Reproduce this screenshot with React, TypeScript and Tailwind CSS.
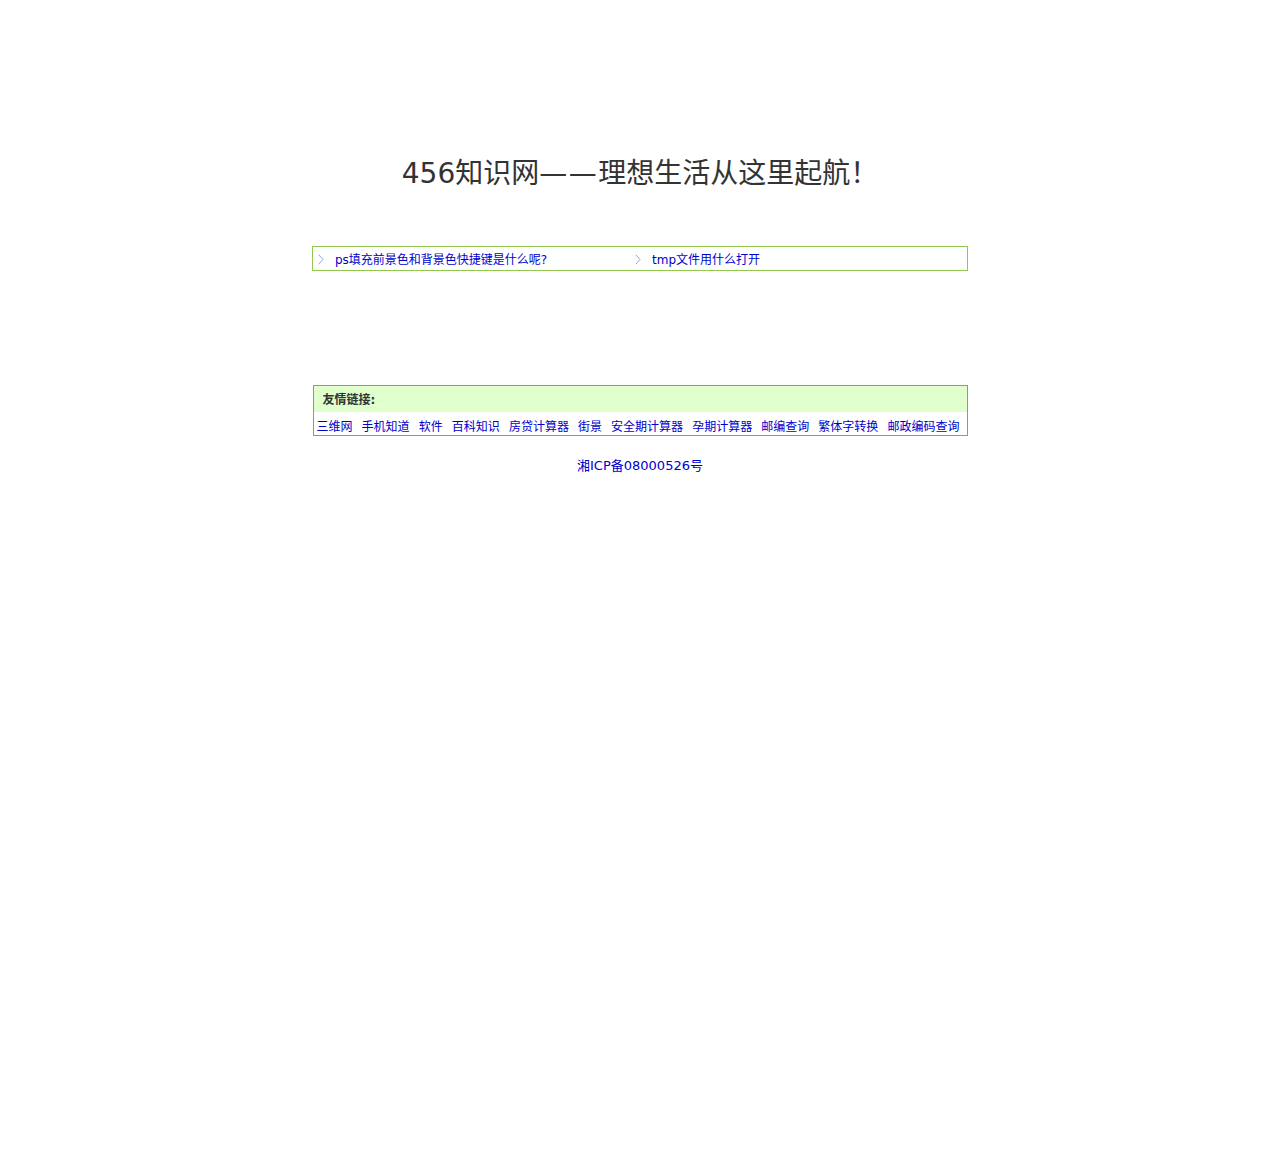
const font = { fontFamily: '"DejaVu Sans", Verdana, "Noto Sans CJK SC", sans-serif' };

const news = ["ps填充前景色和背景色快捷键是什么呢?", "tmp文件用什么打开"];

const links = [
  "三维网",
  "手机知道",
  "软件",
  "百科知识",
  "房贷计算器",
  "街景",
  "安全期计算器",
  "孕期计算器",
  "邮编查询",
  "繁体字转换",
  "邮政编码查询",
];

function Chevron() {
  return (
    <svg width="6" height="11" viewBox="0 0 6 11" className="shrink-0">
      <path d="M0.8 0.8 L5 5.5 L0.8 10.2" fill="none" stroke="#8da6d8" strokeWidth="1" />
    </svg>
  );
}

export default function App() {
  return (
    <div className="min-h-[1167px] bg-white" style={font}>
      <div className="mx-auto w-[656px]">
        <div className="pt-[154px]">
          <h1 className="h-[40px] overflow-visible text-center text-[28px] leading-[40px] font-normal whitespace-nowrap text-[#333]">
            456知识网<span className="tracking-[1.5px]">——</span>理想生活从这里起航！
          </h1>
        </div>

        <ul className="mt-[52px] flex h-[25px] items-center border border-[#93c84f]">
          {news.map((n) => (
            <li key={n} className="flex h-[23px] w-[317px] items-center pt-[2px] pl-[5px]">
              <Chevron />
              <a href="#" className="ml-[11px] pt-[1px] text-[12px] leading-[20px] text-[#0000cc]">
                {n}
              </a>
            </li>
          ))}
        </ul>

        <div className="mx-auto mt-[114px] w-[655px] border border-[#66bb44]">
          <div className="h-[26px] bg-[#e0ffcc] pt-[2px] pl-[9px] text-[12px] leading-[24px] font-bold text-[#333]">
            友情链接:
          </div>
          <div className="flex h-[23px] items-start justify-between pt-[7px] pr-[7px] pl-[3px]">
            {links.map((l) => (
              <a key={l} href="#" className="text-[12px] leading-[16px] text-[#0000cc]">
                {l}
              </a>
            ))}
          </div>
        </div>

        <div className="mt-[17px] text-center">
          <a href="#" className="text-[13px] leading-[20px] text-[#0000cc]">
            湘ICP备08000526号
          </a>
        </div>
      </div>
    </div>
  );
}
